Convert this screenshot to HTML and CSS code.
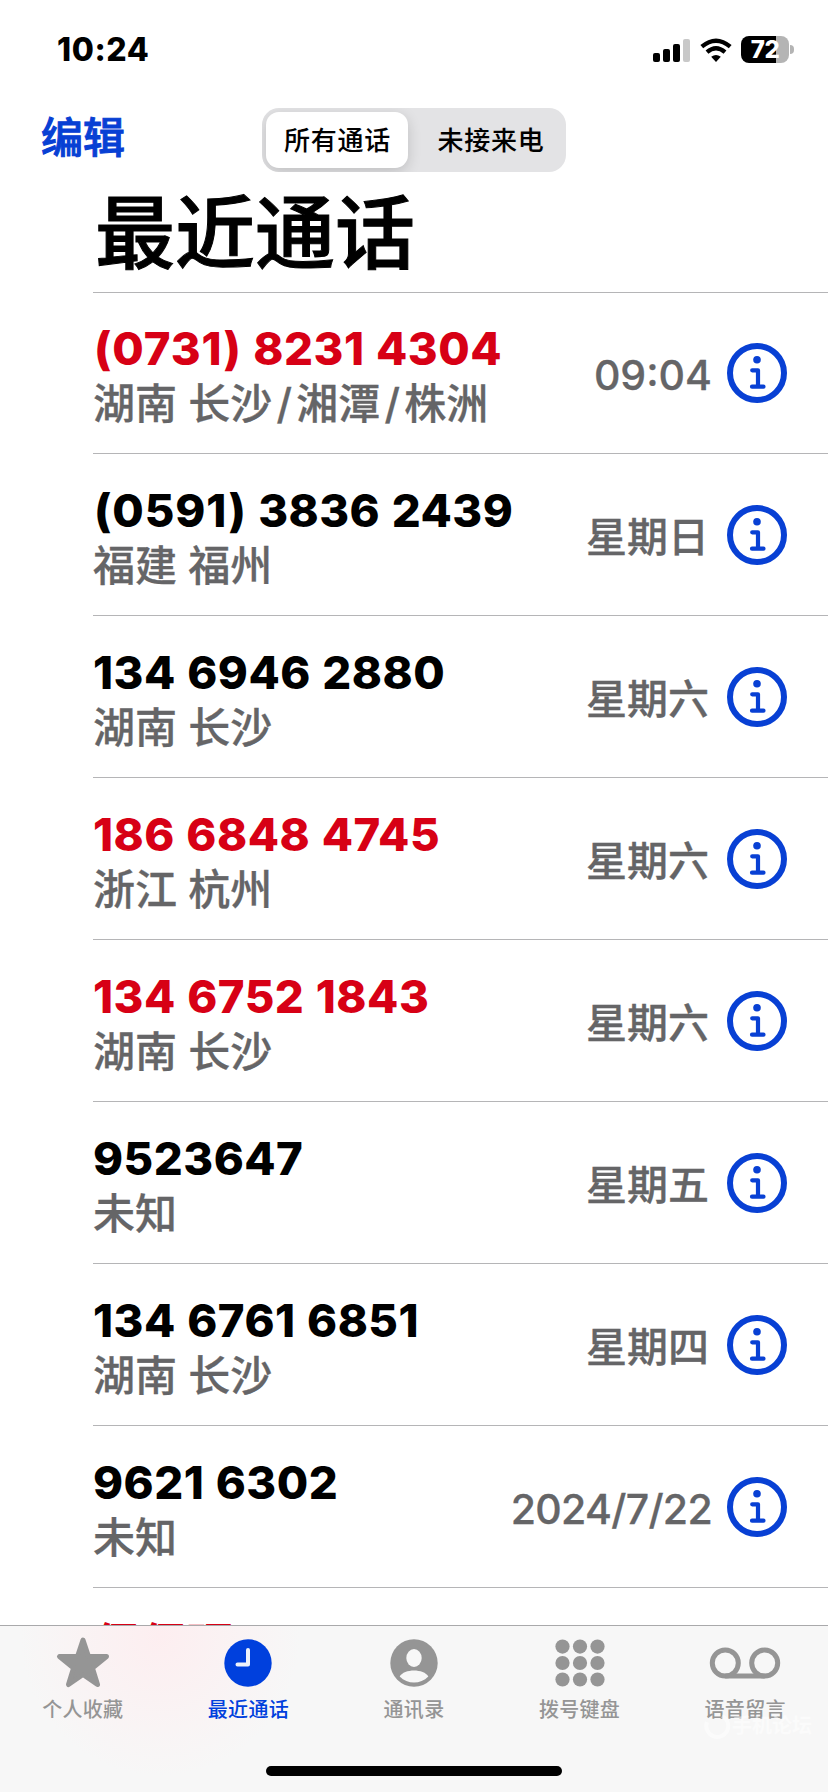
FILE: index.html
```html
<!DOCTYPE html>
<html lang="zh-CN">
<head>
  <meta charset="UTF-8" />
  <meta name="viewport" content="width=device-width, initial-scale=1.0"/>
  <title>最近通话</title>
  <link rel="stylesheet" href="styles.css">
</head>
<body>
  <svg class="defs" width="0" height="0">
    <symbol id="info" viewBox="0 0 60 60">
      <circle cx="30" cy="30" r="27" fill="none" stroke="currentColor" stroke-width="6"/>
      <circle cx="30" cy="16.7" r="3.8" fill="currentColor"/>
      <path d="M25.2 27.3H31V43.7M25 43.7H36.5" fill="none" stroke="currentColor" stroke-width="4.2" stroke-linecap="round" stroke-linejoin="round"/>
    </symbol>
  </svg>

  <div class="status">
    <span class="clock">10:24</span>
    <div class="indicators">
      <svg width="37" height="24" viewBox="0 0 37 24">
        <rect x="0" y="15" width="7" height="9" rx="2"/>
        <rect x="10" y="11" width="7" height="13" rx="2"/>
        <rect x="20" y="6" width="7" height="18" rx="2"/>
        <rect x="30" y="1" width="7" height="23" rx="2" fill="#c8c8c8"/>
      </svg>
      <svg class="wifi" width="32" height="24" viewBox="0 0 32 24">
        <g fill="none" stroke="#000" stroke-width="4.3">
          <path d="M1.8 8.7Q16 -3.4 30.2 8.7"/>
          <path d="M7 14.2Q16 6.4 25 14.2"/>
        </g>
        <path d="M11.2 18.8Q16 15 20.8 18.8L16 24Z"/>
      </svg>
      <div class="battery">72</div>
      <span class="nub"></span>
    </div>
  </div>

  <div class="nav">
    <a class="edit">编辑</a>
    <div class="segment">
      <span class="seg on">所有通话</span>
      <span class="seg">未接来电</span>
    </div>
  </div>

  <h1>最近通话</h1>

  <div class="list">
    <div class="row">
      <div class="who"><div class="num missed"><span class="area">(0731)</span> 8231 4304</div><div class="place">湖南 长沙<i>/</i>湘潭<i>/</i>株洲</div></div>
      <span class="when digits">09:04</span><svg class="info"><use href="#info"/></svg>
    </div>
    <div class="row">
      <div class="who"><div class="num"><span class="area">(0591)</span> 3836 2439</div><div class="place">福建 福州</div></div>
      <span class="when">星期日</span><svg class="info"><use href="#info"/></svg>
    </div>
    <div class="row">
      <div class="who"><div class="num">134 6946 2880</div><div class="place">湖南 长沙</div></div>
      <span class="when">星期六</span><svg class="info"><use href="#info"/></svg>
    </div>
    <div class="row">
      <div class="who"><div class="num missed">186 6848 4745</div><div class="place">浙江 杭州</div></div>
      <span class="when">星期六</span><svg class="info"><use href="#info"/></svg>
    </div>
    <div class="row">
      <div class="who"><div class="num missed">134 6752 1843</div><div class="place">湖南 长沙</div></div>
      <span class="when">星期六</span><svg class="info"><use href="#info"/></svg>
    </div>
    <div class="row">
      <div class="who"><div class="num">9523647</div><div class="place">未知</div></div>
      <span class="when">星期五</span><svg class="info"><use href="#info"/></svg>
    </div>
    <div class="row">
      <div class="who"><div class="num">134 6761 6851</div><div class="place">湖南 长沙</div></div>
      <span class="when">星期四</span><svg class="info"><use href="#info"/></svg>
    </div>
    <div class="row">
      <div class="who"><div class="num">9621 6302</div><div class="place">未知</div></div>
      <span class="when digits date">2024/7/22</span><svg class="info"><use href="#info"/></svg>
    </div>
    <div class="next">保保理</div>
  </div>

  <div class="tabbar">
    <div class="tabs">
      <div class="tab">
        <svg width="56" height="56" viewBox="0 0 56 56"><path d="M28 5L33.5 21.5L51.5 21.5L37.4 33L42.5 49.5L28 39.5L13.5 49.5L18.6 33L4.5 21.5L22.5 21.5Z" fill="currentColor" stroke="currentColor" stroke-width="5" stroke-linejoin="round"/></svg>
        <span>个人收藏</span>
      </div>
      <div class="tab active">
        <svg width="56" height="56" viewBox="0 0 56 56"><circle cx="28" cy="28" r="23.7" fill="currentColor"/><path d="M28 15V29.5H17.5" fill="none" stroke="#eef2fb" stroke-width="4" stroke-linecap="round" stroke-linejoin="round"/></svg>
        <span>最近通话</span>
      </div>
      <div class="tab">
        <svg width="56" height="56" viewBox="0 0 56 56"><circle cx="28" cy="28" r="23.7" fill="currentColor"/><ellipse cx="28" cy="23" rx="7.7" ry="9" fill="#f7f7f7"/><path d="M13.7 41.5C18 33.5 38 33.5 42.3 41.5C34.5 49.5 21.5 49.5 13.7 41.5Z" fill="#f7f7f7"/></svg>
        <span>通讯录</span>
      </div>
      <div class="tab">
        <svg width="56" height="56" viewBox="0 0 56 56" fill="currentColor">
          <circle cx="10.5" cy="11.6" r="7.1"/><circle cx="28" cy="11.6" r="7.1"/><circle cx="45.5" cy="11.6" r="7.1"/>
          <circle cx="10.5" cy="28" r="7.1"/><circle cx="28" cy="28" r="7.1"/><circle cx="45.5" cy="28" r="7.1"/>
          <circle cx="10.5" cy="44.5" r="7.1"/><circle cx="28" cy="44.5" r="7.1"/><circle cx="45.5" cy="44.5" r="7.1"/>
        </svg>
        <span>拨号键盘</span>
      </div>
      <div class="tab">
        <svg width="72" height="56" viewBox="0 0 72 56" fill="none" stroke="currentColor" stroke-width="5"><circle cx="16.3" cy="28" r="13"/><circle cx="55.7" cy="28" r="13"/><path d="M16.3 41H55.7"/></svg>
        <span>语音留言</span>
      </div>
    </div>
    <div class="home"></div>
    <div class="mark">
      <svg width="30" height="30" viewBox="0 0 30 30"><path d="M20 5A11 11 0 1 1 5 11" fill="none" stroke="#fff" stroke-width="4"/></svg>
      <span>手机论坛</span>
    </div>
  </div>
</body>
</html>
```
FILE: styles.css
```css
* { box-sizing: border-box; }
body { margin: 0; height: 1792px; background: #fff; color: #000; font-family: Inter, "Noto Sans CJK SC", sans-serif; overflow: hidden; display: flex; flex-direction: column; }
.defs { display: none; }
.status { height: 99px; padding: 0 34px 0 57px; display: flex; justify-content: space-between; align-items: center; }
.clock { font-size: 32px; font-weight: 800; letter-spacing: 0.6px; }
.indicators { display: flex; align-items: center; }
.wifi { margin: 0 9px 0 10px; }
.battery { width: 48px; height: 27px; border-radius: 8px; background: linear-gradient(90deg, #000 35px, #b4b4b4 35px); color: #fff; font-size: 24px; font-weight: 800; line-height: 27px; text-align: center; letter-spacing: -0.5px; }
.nub { width: 4px; height: 9px; margin-left: 1px; border-radius: 0 5px 5px 0; background: #b4b4b4; }

.nav { height: 81px; padding: 9px 41px; display: flex; align-items: flex-start; }
.edit { width: 221px; color: #0840d4; font-size: 42px; font-weight: 500; line-height: 59px; -webkit-text-stroke: 1px; }
.segment { display: flex; width: 304px; height: 64px; padding: 4px; border-radius: 17px; background: #e3e3e5; overflow: hidden; }
.seg { width: 154px; padding: 1px 0 0 12px; font-size: 26px; font-weight: 500; letter-spacing: 0.7px; line-height: 56px; text-align: center; }
.seg.on { width: 142px; padding-left: 1px; border-radius: 13px; background: #fff; box-shadow: 0 4px 14px rgba(0,0,0,0.16); }
h1 { height: 113px; margin: 0 0 0 93px; padding-left: 2px; border-bottom: 1px solid #b5b5b7; font-size: 80px; font-weight: 500; line-height: 106px; -webkit-text-stroke: 1px; }

.list { flex: 1; height: 0; margin-left: 93px; overflow: hidden; }
.row { display: flex; align-items: center; height: 162px; padding-right: 41px; border-bottom: 1px solid #b5b5b7; }
.row:first-child { height: 161px; }
.who { flex: 1; padding-top: 7px; }
.num { font-size: 45.5px; font-weight: 800; line-height: 54px; white-space: nowrap; letter-spacing: 0.5px; word-spacing: 1px; }
.area { padding-left: 1px; letter-spacing: 0.9px; }
.missed { color: #d70015; }
.place, .when { color: #656567; font-size: 42px; font-weight: 500; line-height: 54px; white-space: nowrap; -webkit-text-stroke: 0.3px; }
.place { padding-top: 1px; }
.place i { display: inline-block; width: 24px; text-align: center; font-style: normal; }
.when { padding-top: 4px; font-size: 41px; }
.digits { margin-right: -3px; }
.date { letter-spacing: -0.7px; }
.info { width: 60px; height: 60px; margin-left: 18px; color: #0840d4; }
.next { padding-top: 27px; color: #d70015; font-size: 47px; font-weight: 700; line-height: 60px; }

.tabbar { position: relative; height: 167px; border-top: 1px solid #a9a9ab; background: radial-gradient(circle at 160px 10px, #fdeef0, #f7f7f7 140px); display: flex; flex-direction: column; }
.tabs { display: flex; padding-top: 9px; }
.tab { flex: 1; display: flex; flex-direction: column; align-items: center; color: #959595; font-size: 20px; font-weight: 500; line-height: 30px; letter-spacing: 0.3px; }
.tab span { margin-top: 4px; }
.tab.active { color: #0040dd; }
.home { width: 296px; height: 10px; margin: 41px auto 0; border-radius: 5px; background: #000; }
.mark { position: absolute; right: 16px; bottom: 51px; display: flex; align-items: center; color: #fff; font-size: 20px; font-weight: 700; line-height: 30px; opacity: 0.5; }
```
